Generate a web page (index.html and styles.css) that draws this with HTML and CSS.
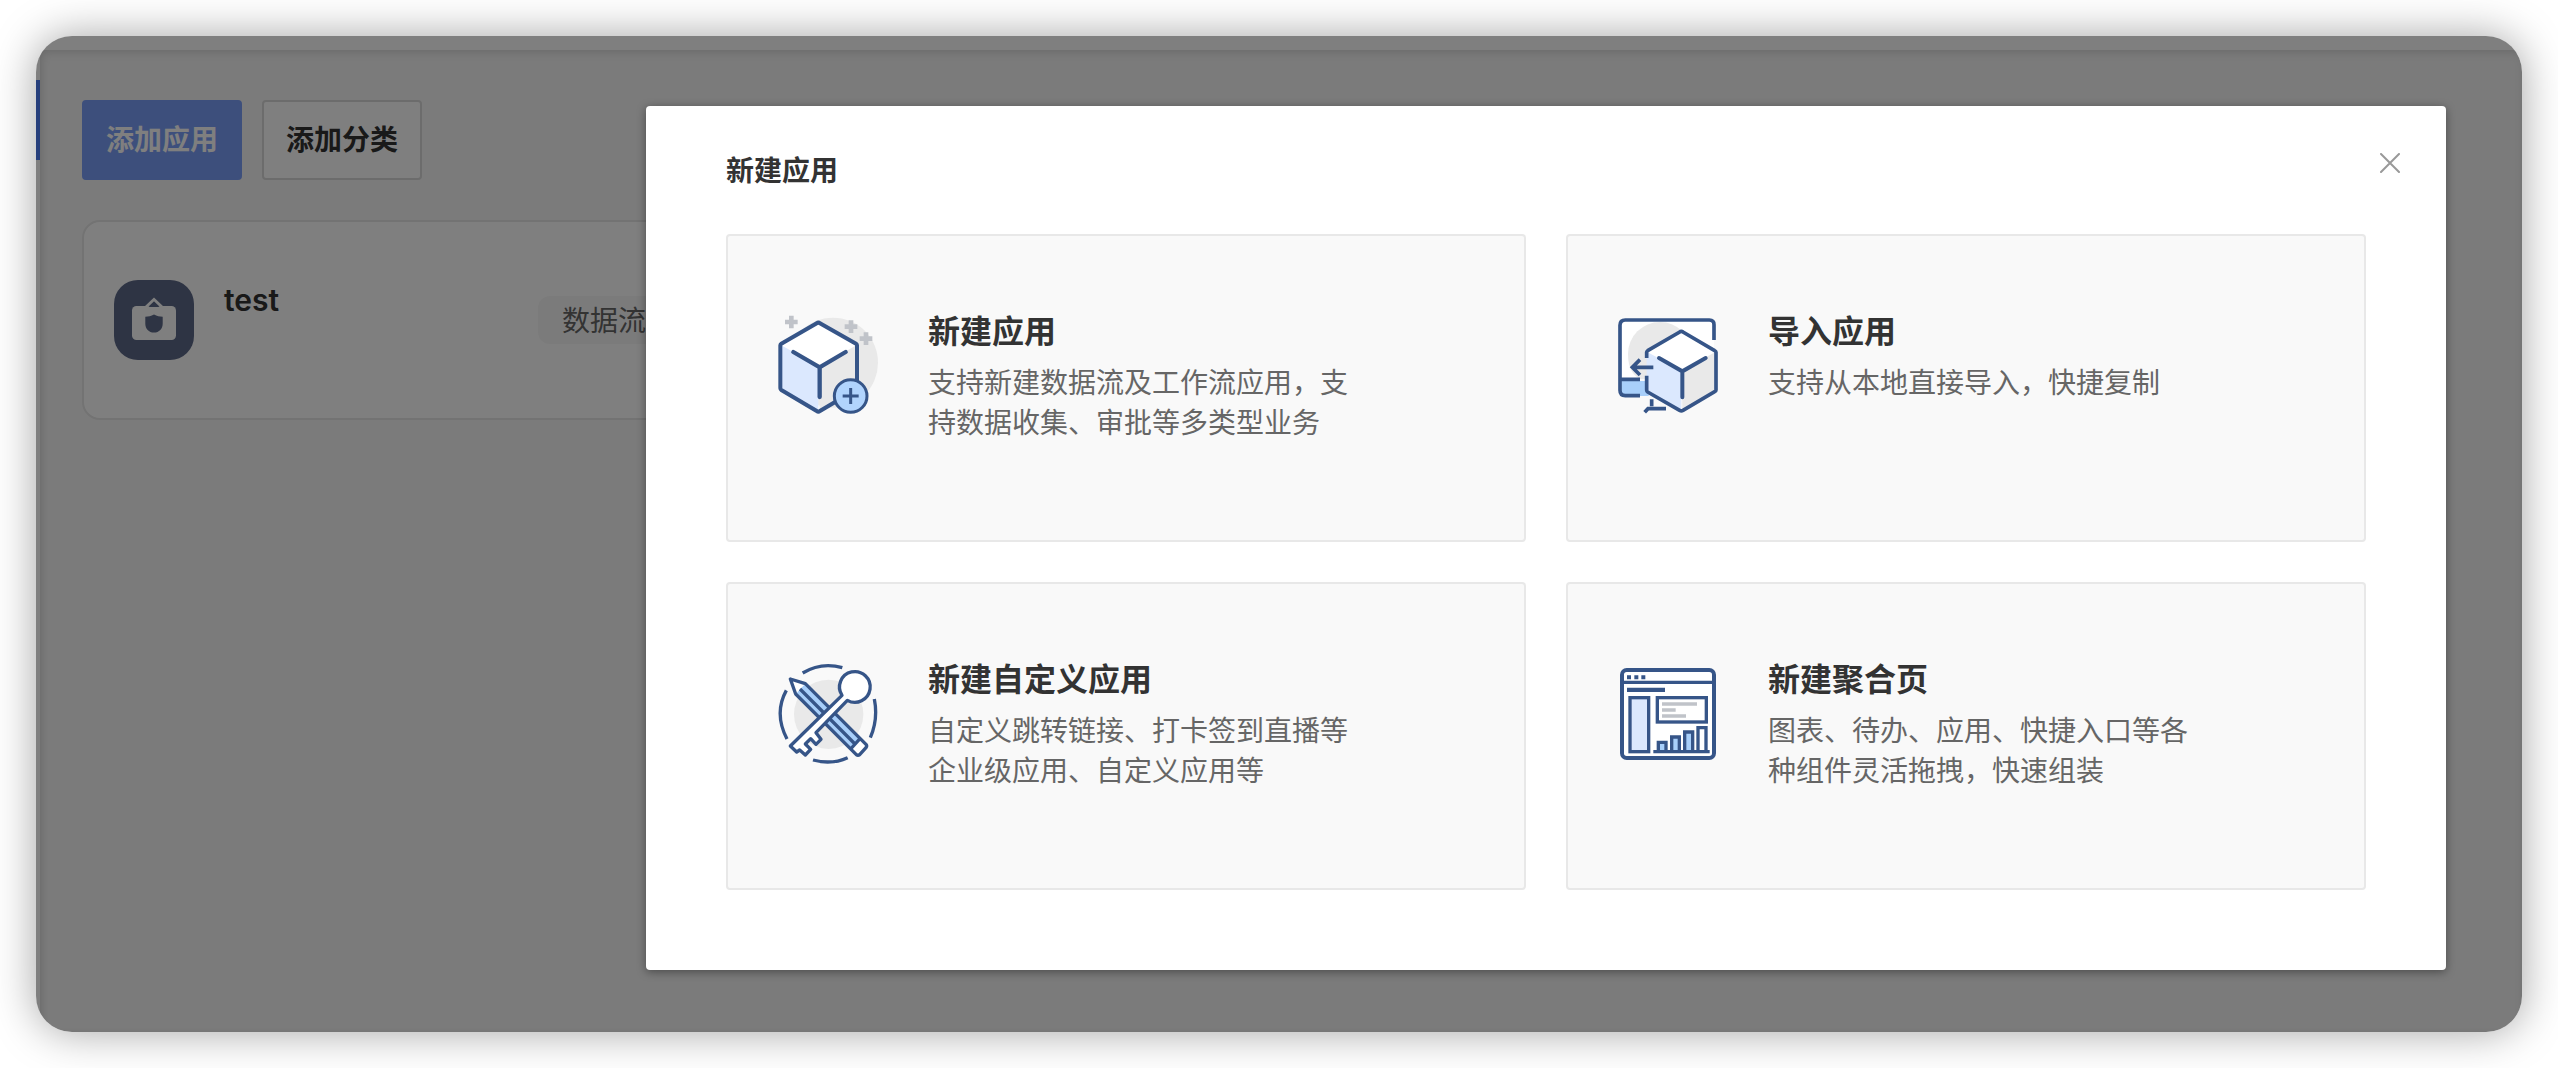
FILE: index.html
```html
<!DOCTYPE html>
<html lang="zh-CN">
<head>
<meta charset="utf-8">
<meta name="viewport" content="width=device-width, initial-scale=1">
<title>新建应用</title>
<link rel="stylesheet" href="styles.css">
</head>
<body>
<div class="window">
  <header class="topbar"></header>
  <div class="workspace">
    <nav class="rail"><span class="rail-active"></span></nav>
    <main class="content">
      <div class="toolbar">
        <button type="button" class="btn btn-primary">添加应用</button>
        <button type="button" class="btn">添加分类</button>
      </div>
      <article class="app-card">
        <svg class="app-icon" viewBox="0 0 80 80" aria-hidden="true">
          <rect width="80" height="80" rx="24" fill="#5c6888"/>
          <path d="M31 28 40 19.500 49 28" fill="none" stroke="#fff" stroke-width="3"/>
          <rect x="18" y="26" width="44" height="34" rx="4.500" fill="#fff"/>
          <path d="M34.500 27 40 21.500 45.500 27Z" fill="#5c6888"/>
          <path d="M40 34.500c3 1.800 5.500 2.200 8.700 2.200v7c0 5-3.500 8.800-8.700 8.800s-8.700-3.800-8.700-8.800v-7c3.200 0 5.700-.4 8.700-2.200Z" fill="#5c6888"/>
        </svg>
        <h3 class="app-name">test</h3>
        <span class="tag">数据流</span>
      </article>
    </main>
  </div>

  <div class="overlay">
    <section class="modal" role="dialog" aria-modal="true" aria-labelledby="modal-title">
      <header class="modal-header">
        <h2 id="modal-title" class="modal-title">新建应用</h2>
        <button type="button" class="close" aria-label="关闭">
          <svg viewBox="0 0 20 20" aria-hidden="true"><path d="M1 1 19 19M19 1 1 19" fill="none" stroke="#999" stroke-width="2" stroke-linecap="round"/></svg>
        </button>
      </header>
      <div class="options">
        <button type="button" class="option">
          <svg class="option-icon" viewBox="54 42 300 300" aria-hidden="true">
            <circle cx="219" cy="188" r="135" fill="#e9e9e9"/>
            <path d="M175 68 61 134V268L175 334Z" fill="#dbe8fe"/>
            <path d="M175 68 291 134V268L179 334V200Z" fill="#e9e9e9"/>
            <path d="M175 68 291 134 179 200 61 134Z" fill="#fff"/>
            <path d="M61 136Q61 133 64 131L170 70Q175 66 180 70L288 131Q291 133 291 136V267L180 333Q175 337 170 333L64 270Q61 268 61 265Z" fill="none" stroke="#365588" stroke-width="12"/>
            <path d="M100 156 179 202 257 156M179 202V291" fill="none" stroke="#365588" stroke-width="13" stroke-linecap="round"/>
            <circle cx="272" cy="288" r="49" fill="#b1d4fd" stroke="#365588" stroke-width="9"/>
            <path d="M248 288H296M272 264V312" stroke="#365588" stroke-width="9"/>
            <path d="M75 66H113M94 47V85M254 80H292M273 61V99M299 116H337M318 97V135" stroke="#c0c3c9" stroke-width="14"/>
          </svg>
          <span class="option-text">
            <strong class="option-title">新建应用</strong>
            <span class="option-desc">支持新建数据流及工作流应用，支持数据收集、审批等多类型业务</span>
          </span>
        </button>
        <button type="button" class="option">
          <svg class="option-icon" viewBox="54 42 300 300" aria-hidden="true">
            <rect x="60" y="60" width="282" height="180" rx="14" fill="#fff"/>
            <path d="M84 162a96 96 0 0 1 192 0v76H122Q84 220 84 162Z" fill="#e9e9e9"/>
            <path d="M64 243H146V288H80Q64 288 64 272Z" fill="#a8cffa"/>
            <path d="M342 120V74Q342 60 328 60H76Q60 60 60 76V271Q60 287 76 287H120M62 238H120" fill="none" stroke="#365588" stroke-width="11"/>
            <path d="M140 155 244 94V332L140 272Z" fill="#dbe8fe"/>
            <path d="M244 94 347 155V272L247 332V212Z" fill="#e9e9e9"/>
            <path d="M244 94 347 155 247 212 140 155Z" fill="#fff"/>
            <path d="M140 174V157Q140 154 143 152L239 96Q244 92 249 96L344 152Q348 154 348 157V270Q348 273 344 275L249 331Q244 334 239 331L143 276Q140 274 140 270V227" fill="none" stroke="#365588" stroke-width="11"/>
            <path d="M177 174 247 214 317 174M247 214V292" fill="none" stroke="#365588" stroke-width="12" stroke-linecap="round"/>
            <path d="M160 202H98M120 179 97 202 120 225" fill="none" stroke="#365588" stroke-width="11"/>
            <path d="M155 298V319M198 326H144L134 337" fill="none" stroke="#365588" stroke-width="11"/>
          </svg>
          <span class="option-text">
            <strong class="option-title">导入应用</strong>
            <span class="option-desc">支持从本地直接导入，快捷复制</span>
          </span>
        </button>
        <button type="button" class="option">
          <svg class="option-icon" viewBox="54 36 300 300" aria-hidden="true">
            <circle cx="206" cy="193" r="104" fill="#e9e9e9"/>
            <path d="M128 69Q184 35 247 53M79 121Q41 190 81 267M159 330Q215 345 263 323M343 147Q355 207 331 263" fill="none" stroke="#365588" stroke-width="10"/>
            <path d="M91 87 136 101 318 283Q322 288 318 293L299 314Q294 318 289 314L107 132Z" fill="#fff"/>
            <path d="M136 101 300 266 272 297 107 132Z" fill="#a8cffa"/>
            <path d="M91 87 136 101 318 283Q322 288 318 293L299 314Q294 318 289 314L107 132ZM120 117 285 282M300 266 272 297" fill="none" stroke="#365588" stroke-width="10" stroke-linejoin="round"/>
            <path d="M246 136A46 46 0 1 1 262 151L168 248 183 268 168 283 152 266 136 282 152 298 136 315 119 300 110 306 91 288Z" fill="#fff" stroke="#365588" stroke-width="10" stroke-linejoin="round"/>
          </svg>
          <span class="option-text">
            <strong class="option-title">新建自定义应用</strong>
            <span class="option-desc">自定义跳转链接、打卡签到直播等企业级应用、自定义应用等</span>
          </span>
        </button>
        <button type="button" class="option">
          <svg class="option-icon" viewBox="54 36 300 300" aria-hidden="true">
            <rect x="66" y="60" width="276" height="264" rx="14" fill="#fff" stroke="#365588" stroke-width="12"/>
            <path d="M66 97H342" stroke="#365588" stroke-width="10"/>
            <path d="M81 76H93V88H81ZM103 76H115V88H103ZM124 76H136V88H124ZM81 113H195V126H81Z" fill="#365588"/>
            <rect x="90" y="143" width="56" height="162" fill="#dbe8fe" stroke="#365588" stroke-width="10"/>
            <rect x="172" y="143" width="147" height="73" fill="#fff" stroke="#365588" stroke-width="10"/>
            <path d="M186 162H291M186 180H227M186 198H258" stroke="#c0c3c9" stroke-width="11"/>
            <path d="M175 305V277H198V305M215 305V261H238V305M254 305V246H278V305" fill="#a8cffa" stroke="#365588" stroke-width="10"/>
            <path d="M294 305V233H318V305" fill="#fff" stroke="#365588" stroke-width="10"/>
            <path d="M160 305H329" stroke="#365588" stroke-width="10"/>
          </svg>
          <span class="option-text">
            <strong class="option-title">新建聚合页</strong>
            <span class="option-desc">图表、待办、应用、快捷入口等各种组件灵活拖拽，快速组装</span>
          </span>
        </button>
      </div>
    </section>
  </div>
</div>
</body>
</html>
```
FILE: styles.css
```css
* {
  box-sizing: border-box;
}

body {
  margin: 0;
  padding: 36px;
  background: #fff;
  color: #333;
  font-family: "Liberation Sans", "Noto Sans CJK SC", sans-serif;
  font-size: 28px;
  line-height: 40px;
}

button {
  font: inherit;
  color: inherit;
  cursor: pointer;
}

h2,
h3 {
  margin: 0;
  font-size: 28px;
}

.window {
  position: relative;
  display: flex;
  flex-direction: column;
  min-height: calc(100vh - 72px);
  border-radius: 36px;
  overflow: hidden;
  background: #fff;
  box-shadow: 0 0 44px rgba(0, 0, 0, 0.36);
}

.topbar {
  height: 14px;
}

.workspace {
  flex: 1;
  display: flex;
}

.rail {
  width: 4px;
  padding-top: 30px;
}

.rail-active {
  display: block;
  height: 80px;
  background: #4c7ef8;
}

.content {
  flex: 1;
  padding: 50px 42px;
  background: #f7f7f7;
  box-shadow: inset 0 4px 12px -2px rgba(0, 0, 0, 0.12), inset 4px 0 12px -4px rgba(0, 0, 0, 0.1);
}

.toolbar {
  display: flex;
  gap: 20px;
  margin-bottom: 40px;
}

.btn {
  height: 80px;
  padding: 2px 22px 0;
  border: 2px solid #d9d9d9;
  border-radius: 4px;
  background: #fff;
  font-weight: 700;
}

.btn-primary {
  border-color: #7a9ef8;
  background: #7a9ef8;
  color: #fff;
}

.app-card {
  display: flex;
  gap: 30px;
  align-items: center;
  width: 620px;
  height: 200px;
  padding: 0 30px;
  border: 2px solid #e6e6e6;
  border-radius: 18px;
  background: #fff;
}

.app-icon {
  width: 80px;
  height: 80px;
}

.app-name {
  flex: 1;
  align-self: flex-start;
  padding-top: 58px;
  font-family: Inter, "Noto Sans CJK SC", sans-serif;
  font-size: 30px;
  font-weight: 600;
}

.tag {
  padding: 6px 24px 2px;
  border-radius: 12px;
  background: #f7f7f7;
  color: #666;
}

.overlay {
  position: absolute;
  inset: 0;
  padding: 70px 76px 62px 610px;
  background: rgba(0, 0, 0, 0.5);
}

.modal {
  padding: 0 80px 80px;
  border-radius: 4px;
  background: #fff;
  box-shadow: 0 2px 10px rgba(0, 0, 0, 0.4);
}

.modal-header {
  position: relative;
  display: flex;
  align-items: center;
  height: 128px;
  padding-top: 4px;
}

.close {
  position: absolute;
  top: 37px;
  right: -44px;
  width: 40px;
  height: 40px;
  padding: 10px;
  border: 0;
  background: none;
}

.close svg {
  display: block;
}

.options {
  display: grid;
  grid-template-columns: 1fr 1fr;
  gap: 40px;
}

.option {
  display: flex;
  gap: 50px;
  align-items: flex-start;
  height: 308px;
  padding: 76px 50px;
  border: 2px solid #e8e8e8;
  border-radius: 4px;
  background: #f9f9f9;
  text-align: left;
}

.option-icon {
  flex: none;
  width: 100px;
  height: 100px;
  margin-top: 2px;
  overflow: visible;
}

.option-text {
  display: flex;
  flex-direction: column;
  gap: 12px;
  width: 420px;
}

.option-title {
  font-size: 32px;
}

.option-desc {
  color: #666;
}
```
